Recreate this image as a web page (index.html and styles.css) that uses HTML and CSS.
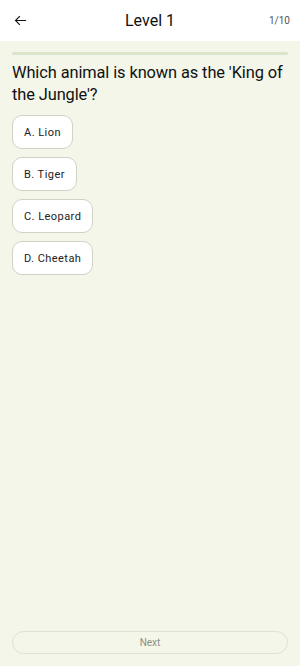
FILE: index.html
```html
<!DOCTYPE html>
<html lang="en">
<head>
    <meta charset="UTF-8">
    <meta name="viewport" content="width=device-width, initial-scale=1.0">
    <title>Level 1</title>
    <link rel="stylesheet" href="styles.css">
</head>
<body>
<div class="screen">
    <div class="topbar">
        <span class="back">
            <svg width="15" height="15" viewBox="0 0 24 24"><path d="M21 12H4M11 5l-7 7 7 7" fill="none" stroke="#111" stroke-width="1.8"/></svg>
        </span>
        <span class="title">Level 1</span>
        <span class="count">1/10</span>
    </div>
    <div class="content">
        <div class="progress"><div class="fill" style="width:0%"></div></div>
        <p class="question">Which animal is known as the 'King of the Jungle'?</p>
        <div class="options">
            <button class="opt">A. Lion</button>
            <button class="opt">B. Tiger</button>
            <button class="opt">C. Leopard</button>
            <button class="opt">D. Cheetah</button>
        </div>
    </div>
    <div class="bottom">
        <button class="next" disabled>Next</button>
    </div>
</div>
</body>
</html>
```
FILE: styles.css
```css
*{
    margin:0;
    padding:0;
    box-sizing:border-box;
}
body{
    width:300px;
    height:666px;
    background-color:#f3f6e9;
    font-family:Roboto, "Noto Sans", sans-serif;
    color:#111;
}
.screen{
    height:666px;
    display:flex;
    flex-direction:column;
}
.topbar{
    height:41px;
    background-color:#ffffff;
    display:flex;
    align-items:center;
    padding:0 10px 0 13px;
}
.back{
    width:15px;
    height:15px;
    display:flex;
}
.title{
    flex:1;
    text-align:center;
    font-size:16px;
    padding-left:3px;
}
.count{
    font-size:10px;
    color:#555;
}
.content{
    flex:1;
    padding:11px 12px 0 12px;
}
.progress{
    height:3px;
    background-color:#d9e6cc;
    border-radius:2px;
}
.fill{
    height:3px;
    background-color:#4c662b;
}
.question{
    font-size:16.4px;
    line-height:22px;
    margin-top:7px;
    letter-spacing:-0.1px;
}
.options{
    display:flex;
    flex-direction:column;
    align-items:flex-start;
    gap:8px;
    margin-top:9px;
}
.opt{
    height:34px;
    padding:0 11px;
    border:1px solid #cfd3c6;
    border-radius:10px;
    background-color:#ffffff;
    font-family:Roboto, sans-serif;
    font-size:11px;
    letter-spacing:0.45px;
    color:#222;
}
.bottom{
    padding:0 12px 12px 12px;
}
.next{
    width:100%;
    height:23px;
    border:1px solid #dee2d3;
    border-radius:12px;
    background-color:transparent;
    font-family:Roboto, sans-serif;
    font-size:10px;
    color:#8c8f86;
}
```
